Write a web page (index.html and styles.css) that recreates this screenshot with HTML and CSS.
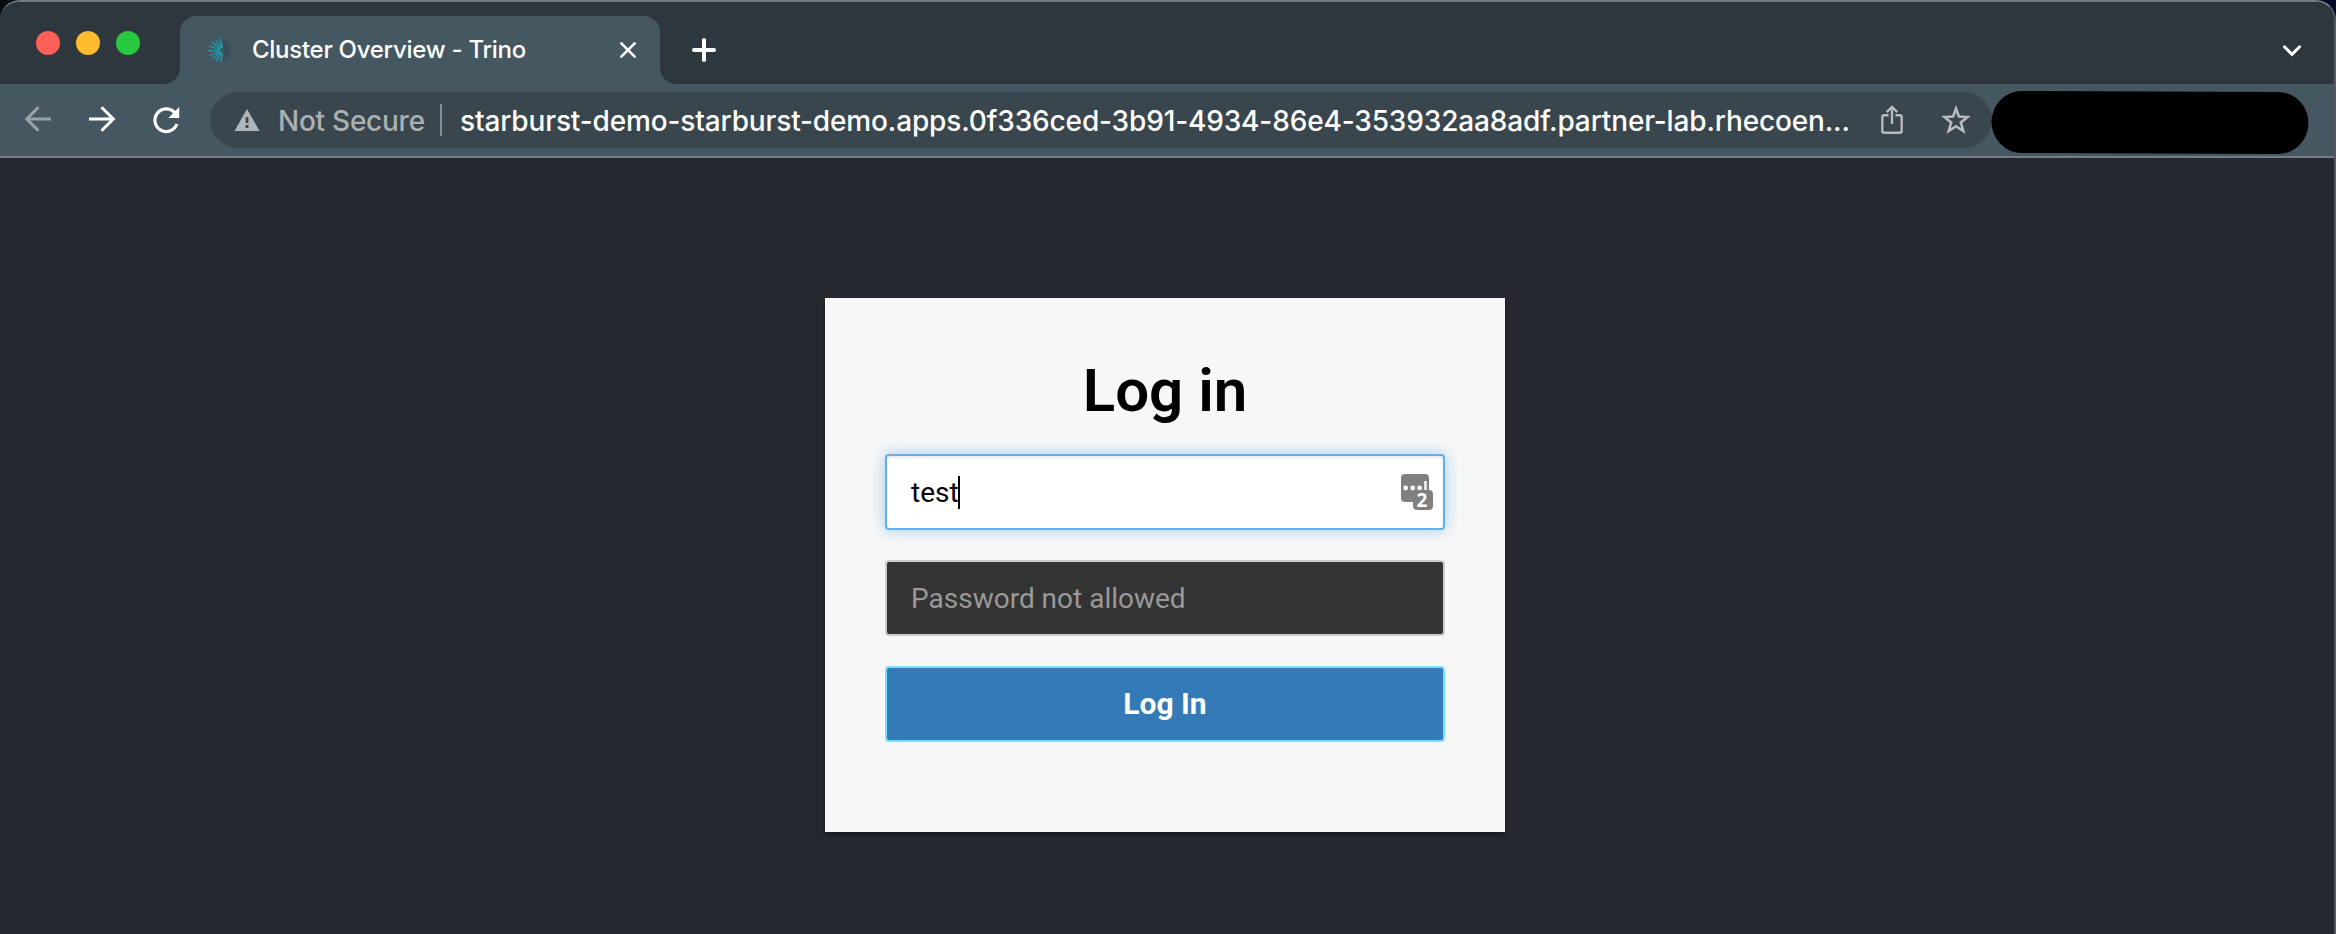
FILE: index.html
```html
<!DOCTYPE html>
<html lang="en">
<head>
<meta charset="utf-8">
<title>Cluster Overview - Trino</title>
<link rel="stylesheet" href="styles.css">
</head>
<body>
<div class="window">
  <header class="tabstrip">
    <div class="lights">
      <span class="light red"></span><span class="light yellow"></span><span class="light green"></span>
    </div>
    <div class="tab">
      <svg class="favicon" width="24" height="24" viewBox="0 0 24 24" stroke-width="1.2" stroke-linecap="round">
        <g stroke="#37475a">
          <path d="M16 14V23.2M16.8 14L19.2 22.3M17.4 13.6L21.4 20.4M17.8 13L23 17.6M18 12.4L23.3 14.7M18 11.8L23.3 11.3M17.8 11.1L22.8 8M17.4 10.4L21.2 5.2M16.8 10L18.8 3M16 10V1.4"/>
        </g>
        <g stroke="#1f97a8" stroke-width="1.5">
          <path d="M14.4 9.3L11.8 .9M13 9.8L8 2M12 10.4L4.4 4.4M11.4 11.4L1.8 8.2M10.8 12.8H.8M11.4 14L2 17.4M12.2 14.8L5 20.4M13.2 15.4L8.6 22.4M14.5 15.8L12.8 23.2"/>
        </g>
      </svg>
      <span class="tab-title">Cluster Overview - Trino</span>
      <svg class="close" width="18" height="18" viewBox="0 0 18 18" fill="none" stroke="#fff" stroke-width="2.6" stroke-linecap="round"><path d="M2.3 2.3L15.7 15.7M15.7 2.3L2.3 15.7"/></svg>
    </div>
    <svg class="new-tab" width="24" height="24" viewBox="0 0 24 24" stroke="#fff" stroke-width="4" stroke-linecap="round"><path d="M12 2V22M2 12H22"/></svg>
    <svg class="tab-search" width="20" height="14" viewBox="0 0 20 14" fill="none" stroke="#fff" stroke-width="3" stroke-linecap="round"><path d="M2.4 2.8L10 10.4L17.6 2.8"/></svg>
  </header>

  <nav class="toolbar">
    <svg class="back" width="28" height="28" viewBox="0 0 28 28" fill="none" stroke="#98a2a7" stroke-width="3"><path d="M27 14H3.5M14.5 2.2L2.7 14L14.5 25.8" stroke-linejoin="miter"/></svg>
    <svg class="forward" width="28" height="28" viewBox="0 0 28 28" fill="none" stroke="#fff" stroke-width="3"><path d="M1 14H24.5M13.5 2.2L25.3 14L13.5 25.8"/></svg>
    <svg class="reload" width="28" height="28" viewBox="0 0 28 28"><path d="M22.6 6.6A11.3 11.3 0 1 0 24.9 18" fill="none" stroke="#fff" stroke-width="3.2" stroke-linecap="butt"/><path d="M27.2 1V12H16.4z" fill="#fff"/></svg>
    <div class="omnibox">
      <svg class="warn" width="26" height="22" viewBox="0 0 26 22"><path d="M13 0L25.5 22H.5z" fill="#b0b5b8"/><path d="M11.6 8H14.4V14H11.6zM11.6 16H14.4V19H11.6z" fill="#39464d"/></svg>
      <span class="not-secure">Not Secure</span>
      <span class="divider"></span>
      <span class="url">starburst-demo-starburst-demo.apps.0f336ced-3b91-4934-86e4-353932aa8adf.partner-lab.rhecoen...</span>
      <svg class="share" width="22" height="30" viewBox="0 0 22 30" fill="none" stroke="#b9babb" stroke-width="2.4"><path d="M7.5 10.2H3.4Q1.3 10.2 1.3 12.3V25.7Q1.3 27.8 3.4 27.8H18.6Q20.7 27.8 20.7 25.7V12.3Q20.7 10.2 18.6 10.2H14.5M11 19V2.5M5.7 7.2L11 2L16.3 7.2"/></svg>
      <svg class="star" width="30" height="30" viewBox="0 0 30 30" fill="none" stroke="#b9babb" stroke-width="2.6"><path d="M15 3.6L17.9 11.5L26.4 12L19.8 17.4L22.3 26L15 21.2L7.7 26L10.2 17.4L3.6 12L12.1 11.5z"/></svg>
    </div>
    <svg class="redacted" width="318" height="64" viewBox="0 0 318 64"><path d="M31 1L287 2A30.5 31 0 0 1 287 64L31 63A30.5 31 0 0 1 31 1z"/></svg>
  </nav>

  <main class="page">
    <form class="card">
      <h1 class="heading">Log in</h1>
      <div class="field focused">
        <span class="value">test</span><span class="caret"></span>
        <svg class="manager" width="32" height="36" viewBox="0 0 32 36">
          <rect width="28" height="28" rx="4" fill="#808080"/>
          <g fill="#fff"><circle cx="4.7" cy="14" r="2.4"/><circle cx="11.7" cy="14" r="2.4"/><circle cx="18.6" cy="14" r="2.4"/><rect x="23.3" y="7" width="2.4" height="10"/></g>
          <rect x="12" y="16" width="20" height="20" rx="4" fill="#808080"/>
          <text class="badge" x="20.9" y="33" text-anchor="middle">2</text>
        </svg>
      </div>
      <div class="field disabled"><span class="value">Password not allowed</span></div>
      <button class="submit" type="button">Log In</button>
    </form>
  </main>
</div>
</body>
</html>
```
FILE: styles.css
```css
* { box-sizing: border-box; }

body {
  margin: 0;
  background: linear-gradient(90deg, #0a0c10 50%, #050826 50%);
  overflow: hidden;
}

svg { display: block; flex: none; overflow: visible; }

.window {
  width: 2336px;
  height: 934px;
  display: flex;
  flex-direction: column;
  border-top: 2px solid #737d80;
  border-right: 2px solid #54595f;
  border-radius: 20px 20px 0 0;
  background: #25282f;
  overflow: hidden;
}

.tabstrip {
  height: 82px;
  flex: none;
  display: flex;
  align-items: flex-start;
  background: #2d373d;
  font-family: Inter, sans-serif;
}

.lights {
  display: flex;
  gap: 16px;
  width: 180px;
  padding: 29px 0 0 36px;
}

.light { width: 24px; height: 24px; border-radius: 50%; }
.red { background: #ff5f57; }
.yellow { background: #febb2e; }
.green { background: #28c840; }

.tab {
  position: relative;
  width: 480px;
  height: 68px;
  margin-top: 14px;
  display: flex;
  align-items: flex-start;
  padding: 22px 23px 0 28px;
  border-radius: 16px 16px 0 0;
  background: #455760;
}

.tab::before,
.tab::after {
  content: "";
  position: absolute;
  bottom: 0;
  width: 16px;
  height: 16px;
}
.tab::before { left: -16px; background: radial-gradient(circle at 0 0, transparent 15.5px, #455760 16px); }
.tab::after { right: -16px; background: radial-gradient(circle at 100% 0, transparent 15.5px, #455760 16px); }

.tab-title {
  margin-left: 20px;
  font-size: 24px;
  line-height: 24px;
  font-weight: 500;
  color: #fff;
  white-space: nowrap;
  letter-spacing: -0.27px;
}

.close { margin: 3px 0 0 auto; }
.new-tab { margin: 36px 0 0 32px; }
.tab-search { margin: 42px 32px 0 auto; }

.toolbar {
  height: 74px;
  flex: none;
  display: flex;
  align-items: flex-start;
  background: #455760;
  border-bottom: 2px solid #737d83;
  font-family: Inter, sans-serif;
}

.back { margin: 21px 0 0 24px; }
.forward { margin: 21px 0 0 36px; }
.reload { margin: 22px 0 0 36px; }

.omnibox {
  width: 1782px;
  height: 56px;
  margin: 8px 0 0 30px;
  display: flex;
  align-items: center;
  padding-left: 24px;
  border-radius: 28px;
  background: #39464d;
  font-size: 28px;
  line-height: 40px;
  white-space: nowrap;
}

.not-secure { width: 162px; margin-left: 18px; padding-top: 1px; color: #abb0b3; font-weight: 500; letter-spacing: -0.25px; }
.divider { width: 2px; height: 32px; background: #889095; }
.url { width: 1421px; margin-left: 18px; padding-top: 1px; color: #fff; font-weight: 500; letter-spacing: -0.14px; }
.star { margin-left: 38px; }
.redacted { margin: 6px 0 0 -1px; fill: #000; }

.page {
  flex: 1;
  padding: 140px 0 0 825px;
  font-family: Roboto, sans-serif;
}

.card {
  width: 680px;
  height: 534px;
  display: flex;
  flex-direction: column;
  gap: 30px;
  padding: 56px 60px 0;
  background: #f7f7f7;
  box-shadow: 0 4px 4px rgba(0, 0, 0, .3);
}

.heading {
  height: 70px;
  margin: 0;
  font-size: 60px;
  line-height: 74px;
  font-weight: 600;
  text-align: center;
  color: #000;
}

.field {
  height: 76px;
  display: flex;
  align-items: center;
  padding: 0 10px 0 24px;
  border: 2px solid #ccc;
  border-radius: 4px;
  font-size: 28px;
  line-height: 40px;
}

.value { padding-top: 2px; }

.focused {
  background: #fff;
  border-color: #66afe9;
  color: #000;
  box-shadow: inset 0 2px 2px rgba(0, 0, 0, .075), 0 0 16px rgba(102, 175, 233, .6);
}

.caret { width: 2px; height: 33px; margin-left: -1px; background: #000; }
.manager { margin: 0 0 0 auto; }
.badge { font: 700 19px "Open Sans", sans-serif; fill: #fff; }

.disabled { background: #333; color: #999; }

.submit {
  height: 76px;
  padding: 0;
  border: 2px solid #77dfff;
  border-radius: 4px;
  background: #337ab7;
  color: #fff;
  font: 700 30px/40px Roboto, sans-serif;
}
```
